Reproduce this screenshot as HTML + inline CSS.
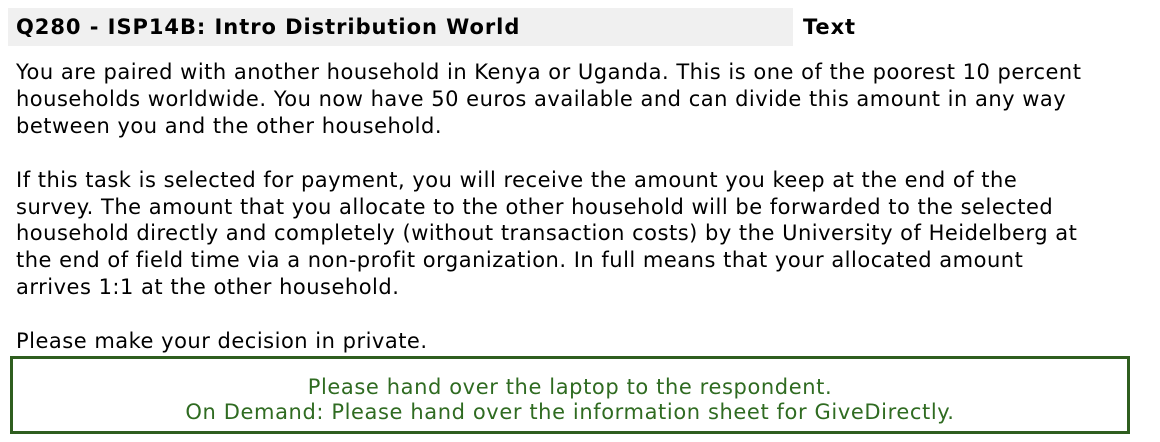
<!DOCTYPE html>
<html><head><meta charset="utf-8"><style>
body{margin:0;width:1160px;height:442px;background:#fff;font-family:Verdana,"DejaVu Sans",sans-serif;color:#000;overflow:hidden;position:relative}
.hdr{position:absolute;left:8px;top:8px;width:785px;height:38px;background:#f0f0f0}
.hdr span{position:absolute;left:8px;top:7px;font-weight:bold;font-size:21px;letter-spacing:0.95px;white-space:nowrap}
.txt{position:absolute;left:803px;top:15px;font-weight:bold;font-size:21px;letter-spacing:0.9px}
.body{position:absolute;left:16px;top:59px;width:1140px;font-size:21px;letter-spacing:0.5px;line-height:26.9px;white-space:nowrap}
.body p{margin:0 0 26.9px 0}
.box{position:absolute;left:10px;top:356px;width:1114px;height:72px;border:3px solid #2f5e1f;color:#2f6b21;text-align:center;font-size:21px;letter-spacing:0.6px;line-height:25px;white-space:nowrap}
.box div{padding-top:16px}
</style></head><body>
<div class="hdr"><span>Q280 - ISP14B: Intro Distribution World</span></div>
<div class="txt">Text</div>
<div class="body">
<p>You are paired with another household in Kenya or Uganda. This is one of the poorest 10 percent<br>households worldwide. You now have 50 euros available and can divide this amount in any way<br>between you and the other household.</p>
<p>If this task is selected for payment, you will receive the amount you keep at the end of the<br>survey. The amount that you allocate to the other household will be forwarded to the selected<br>household directly and completely (without transaction costs) by the University of Heidelberg at<br>the end of field time via a non-profit organization. In full means that your allocated amount<br>arrives 1:1 at the other household.</p>
<p>Please make your decision in private.</p>
</div>
<div class="box"><div>Please hand over the laptop to the respondent.<br>On Demand: Please hand over the information sheet for GiveDirectly.</div></div>
</body></html>
